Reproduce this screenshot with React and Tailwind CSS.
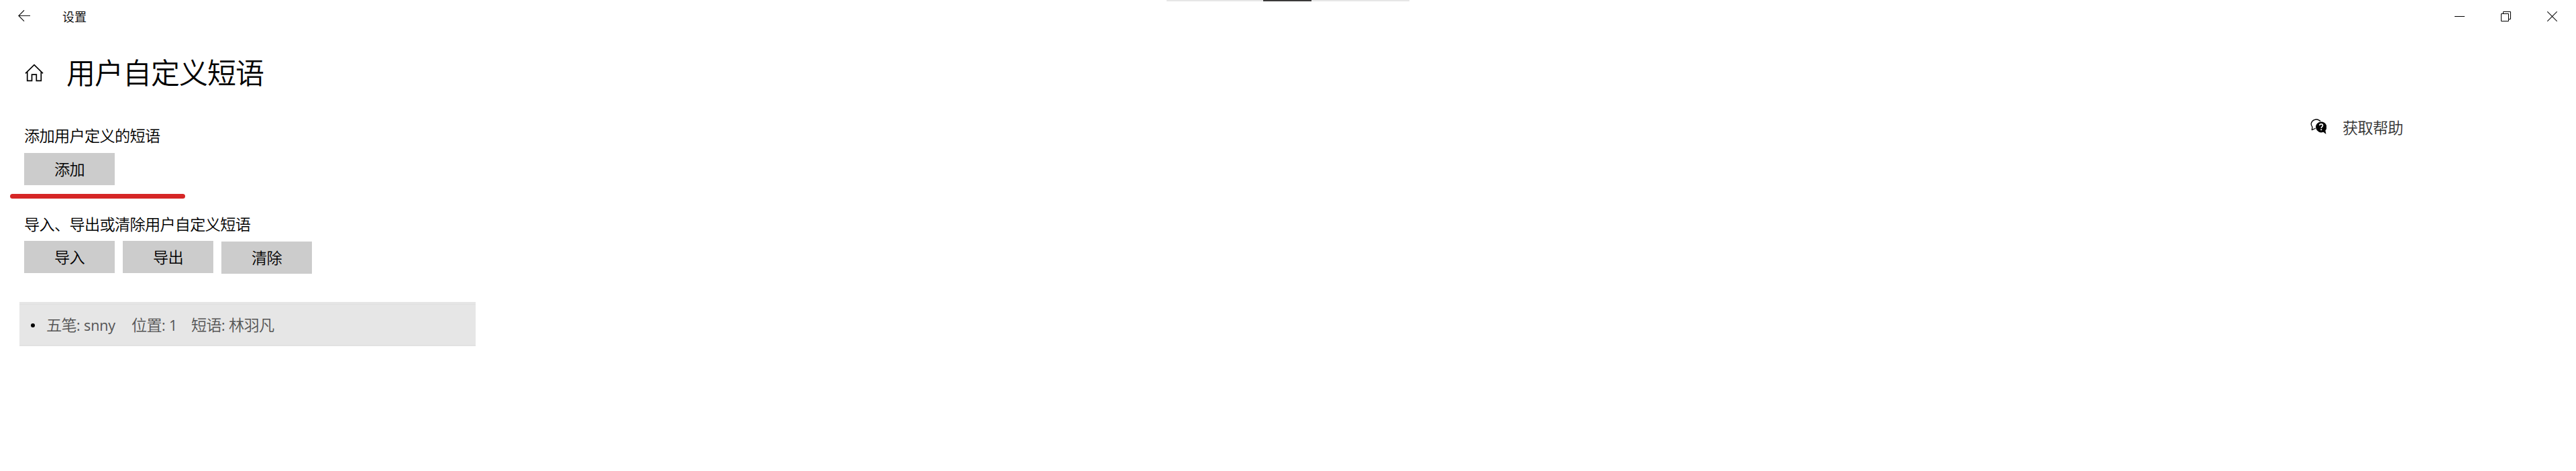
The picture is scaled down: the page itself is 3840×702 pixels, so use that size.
const Btn = ({ children, className = '' }) => (
  <button className={`flex h-12 w-[135px] items-center justify-center bg-[#cccccc] text-[23.2px] leading-none tracking-[-0.7px] text-black ${className}`}>
    <span>{children}</span>
  </button>
)

const Latin = ({ children }) => (
  <span className="font-['Open_Sans',sans-serif] text-[21.5px] font-normal tracking-[-0.1px] whitespace-pre">{children}</span>
)

function TitleBar() {
  return (
    <header className="flex h-12 items-start justify-between">
      <div className="flex pl-[27px]">
        <svg className="mt-[15px] h-[18px] w-[18px]" viewBox="0 0 18 18" fill="none" stroke="#111" strokeWidth="1.2">
          <path d="M18 8.5H.8M9 .3.8 8.5 9 16.7" />
        </svg>
        <span className="mt-[14px] ml-[48px] text-[18px] leading-[20px]">设置</span>
      </div>
      <div className="mt-[1px] flex h-[47px] w-[208px] items-start">
        <svg className="mt-[16px] ml-[27px] h-[15px] w-[15px]" viewBox="0 0 15 15" stroke="#000">
          <path d="M0 7.5H15" />
        </svg>
        <svg className="mt-[16px] ml-[54px] h-[15px] w-[15px]" viewBox="0 0 15 15" fill="none" stroke="#000">
          <path d="M.5 3.5h11v11H.5zM3.5 3.5v-3h11v11h-3" />
        </svg>
        <svg className="mt-[16px] ml-[54px] h-[15px] w-[15px]" viewBox="0 0 15 15" stroke="#111" strokeWidth="1.1">
          <path d="M.3.3l14.4 14.4M14.7.3.3 14.7" />
        </svg>
      </div>
    </header>
  )
}

function HelpIcon() {
  return (
    <svg className="mt-[3px] h-6 w-6" viewBox="0 0 24 24">
      <path d="M2.3 16.6 3 12.2A7.6 6.8 0 1 1 7.2 14.5Z" fill="#fff" stroke="#000" strokeWidth="1.3" strokeLinejoin="round" />
      <path
        d="M16.2 4.4a8 8 0 1 0 3.2 15.3L23.4 23l-1-5.4A8 8 0 0 0 16.2 4.4Z"
        stroke="#fff"
        strokeWidth="1.4"
        paintOrder="stroke"
      />
      <path d="M13.7 9.9c.2-1.4 1.2-2 2.4-2s2.4.8 2.4 2.2c0 1.9-2.2 1.8-2.2 3.9" fill="none" stroke="#fff" strokeWidth="1.7" />
      <path d="M15.3 15.3h1.9v1.9h-1.9z" fill="#fff" />
    </svg>
  )
}

export default function App() {
  return (
    <div className="relative h-[702px] w-[3840px] overflow-hidden bg-white font-['Noto_Sans_CJK_SC','Noto_Sans',sans-serif] font-[350] text-black">
      <div className="absolute top-0 left-[1739px] flex h-[2px] w-[362px] bg-[#e6e6e6] pl-[144px]">
        <div className="h-[2px] w-[72px] bg-[#3b3a3a]" />
      </div>
      <TitleBar />
      <div className="flex items-start justify-between">
        <main>
          <div className="flex h-[120px] items-start pl-[37px]">
            <svg className="mt-[47px] h-[27px] w-[28px]" viewBox="0 0 28 27" fill="none" stroke="#000" strokeWidth="1.7">
              <path d="M1 14.3 14 1.6 27 14.3M3.7 12v13.4h6.8v-9.2h6.8v9.2h7V12" />
            </svg>
            <h1 className="mt-[32px] ml-[34px] text-[43px] leading-[52px] tracking-[-1px]">用户自定义短语</h1>
          </div>
          <section className="pl-9">
            <h2 className="pt-[18px] text-[23.2px] leading-[30px] tracking-[-0.7px]">添加用户定义的短语</h2>
            <Btn className="mt-[12px]">添加</Btn>
          </section>
          <div className="mt-[13px] ml-[15px] h-[7px] w-[261px] rounded-full bg-[#d62626]" />
          <section className="pl-9">
            <h2 className="pt-[22px] text-[23.2px] leading-[30px] tracking-[-0.7px]">导入、导出或清除用户自定义短语</h2>
            <div className="mt-[11px] flex gap-3">
              <Btn>导入</Btn>
              <Btn>导出</Btn>
              <Btn className="mt-px">清除</Btn>
            </div>
          </section>
          <div className="mt-[42px] ml-[29px] h-[66px] w-[680px] bg-[#e6e6e6] pt-[3px]">
            <div className="flex h-[62px] items-center border-y border-[#dfdfdf] pl-[17px] text-[23.2px] leading-[30px] tracking-[-0.7px] text-[#555]">
              <span className="mt-[2px] mr-[17px] h-[6px] w-[6px] rounded-full bg-black" />
              <span className="w-[127px]">五笔<Latin>: snny</Latin></span>
              <span className="w-[89px]">位置<Latin>: 1</Latin></span>
              <span>短语<Latin>: </Latin>林羽凡</span>
            </div>
          </div>
        </main>
        <aside className="mt-[126px] mr-[258px] flex items-start">
          <HelpIcon />
          <span className="ml-[24px] text-[23.2px] leading-[30px] tracking-[-0.7px] text-[#333]">获取帮助</span>
        </aside>
      </div>
    </div>
  )
}
